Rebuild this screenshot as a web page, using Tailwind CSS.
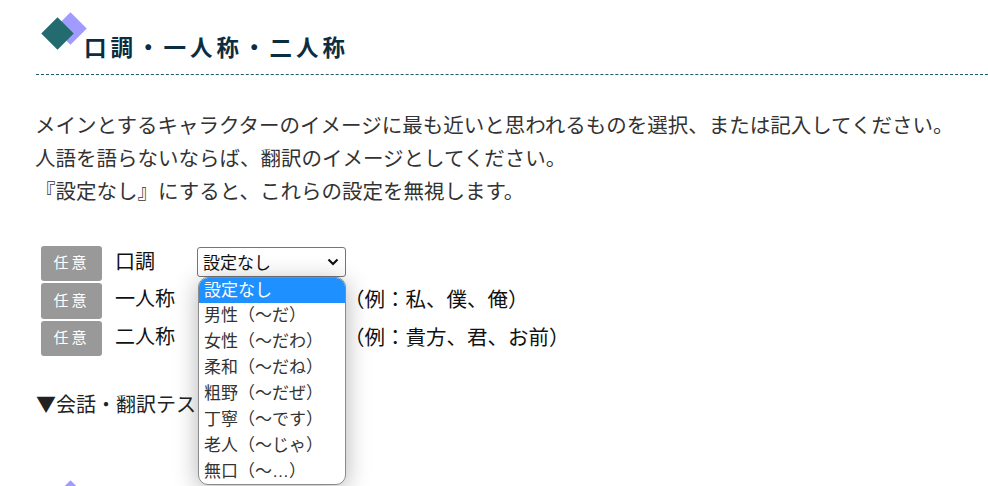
<!DOCTYPE html>
<html lang="ja">
<head>
<meta charset="utf-8">
<script src="https://cdn.jsdelivr.net/npm/@tailwindcss/browser@4"></script>
</head>
<body class="bg-white h-[486px] w-[988px] overflow-hidden text-[#333] font-['Noto_Sans_CJK_JP','Noto_Sans',sans-serif]">
<main class="pl-9 pt-[12px] h-[486px] overflow-hidden">
  <section class="relative h-[63px] border-b border-dashed border-[#1f5c66] pl-[48px] pt-[19px]">
    <span class="absolute left-[23px] top-[5px] w-[23px] h-[23px] rotate-45 bg-[#a29bff]"></span>
    <span class="absolute left-[10px] top-[10px] w-[23px] h-[23px] rotate-45 bg-[#246b70]"></span>
    <h2 class="relative text-[22.5px] leading-[30px] font-bold tracking-[4px] text-[#0b2d42]">口調・一人称・二人称</h2>
  </section>
  <div class="mt-[33px] -ml-[1px] text-[20.5px] leading-[33px] text-[#333]">
    <p>メインとするキャラクターのイメージに最も近いと思われるものを選択、または記入してください。</p>
    <p>人語を語らないならば、翻訳のイメージとしてください。</p>
    <p>『設定なし』にすると、これらの設定を無視します。</p>
  </div>
  <div class="relative mt-[39px] ml-[5px] flex flex-col gap-[2px] text-[#111]">
    <div class="flex items-start h-[35px]">
      <span class="w-[61px] h-[35px] pb-[2px] flex items-center justify-center rounded-[3px] bg-[#999] text-white text-[15px] tracking-[3px]">任意</span>
      <span class="ml-[13px] w-[82px] text-[20px] leading-[30px]">口調</span>
      <div class="mt-[1px] flex items-center justify-between w-[149px] h-[30px] px-[5px] rounded-[3px] border border-[#767676] bg-white text-[17px]">
        <span>設定なし</span>
        <svg width="12" height="8" viewBox="0 0 12 8" class="mr-[1px]"><path d="M1.5 1.5 L6 6 L10.5 1.5" fill="none" stroke="#111" stroke-width="2.2"/></svg>
      </div>
    </div>
    <div class="flex items-start h-[36px]">
      <span class="w-[61px] h-[36px] pb-[2px] flex items-center justify-center rounded-[3px] bg-[#999] text-white text-[15px] tracking-[3px]">任意</span>
      <span class="ml-[13px] w-[82px] text-[20px] leading-[30px]">一人称</span>
      <span class="ml-[147px] text-[20.5px] leading-[30px]">（例：私、僕、俺）</span>
    </div>
    <div class="flex items-start h-[35px]">
      <span class="w-[61px] h-[35px] pb-[2px] flex items-center justify-center rounded-[3px] bg-[#999] text-white text-[15px] tracking-[3px]">任意</span>
      <span class="ml-[13px] w-[82px] text-[20px] leading-[30px]">二人称</span>
      <span class="ml-[147px] text-[20.5px] leading-[30px]">（例：貴方、君、お前）</span>
    </div>
    <ul class="absolute z-10 left-[157px] top-[31px] w-[148px] h-[208px] overflow-hidden bg-white rounded-[10px] border border-[#8a8a8a] shadow-[0_4px_24px_rgba(0,0,0,0.3)] text-[#333] text-[17px] leading-[22px]">
      <li class="h-[25px] pl-[5px] bg-[#1e90ff] text-white">設定なし</li>
      <li class="h-[26px] pl-[5px]">男性（～だ）</li>
      <li class="h-[26px] pl-[5px]">女性（～だわ）</li>
      <li class="h-[26px] pl-[5px]">柔和（～だね）</li>
      <li class="h-[26px] pl-[5px]">粗野（～だぜ）</li>
      <li class="h-[26px] pl-[5px]">丁寧（～です）</li>
      <li class="h-[26px] pl-[5px]">老人（～じゃ）</li>
      <li class="h-[26px] pl-[5px]">無口（～<span class="font-['Liberation_Sans']">…</span>）</li>
    </ul>
  </div>
  <p class="mt-[33px] text-[20px] leading-[30px] text-[#222]">▼会話・翻訳テスト</p>
  <div class="relative mt-[62px] h-[30px]">
    <span class="absolute left-[23px] top-[4px] w-[23px] h-[23px] rotate-45 bg-[#a29bff]"></span>
  </div>
</main>
</body>
</html>
